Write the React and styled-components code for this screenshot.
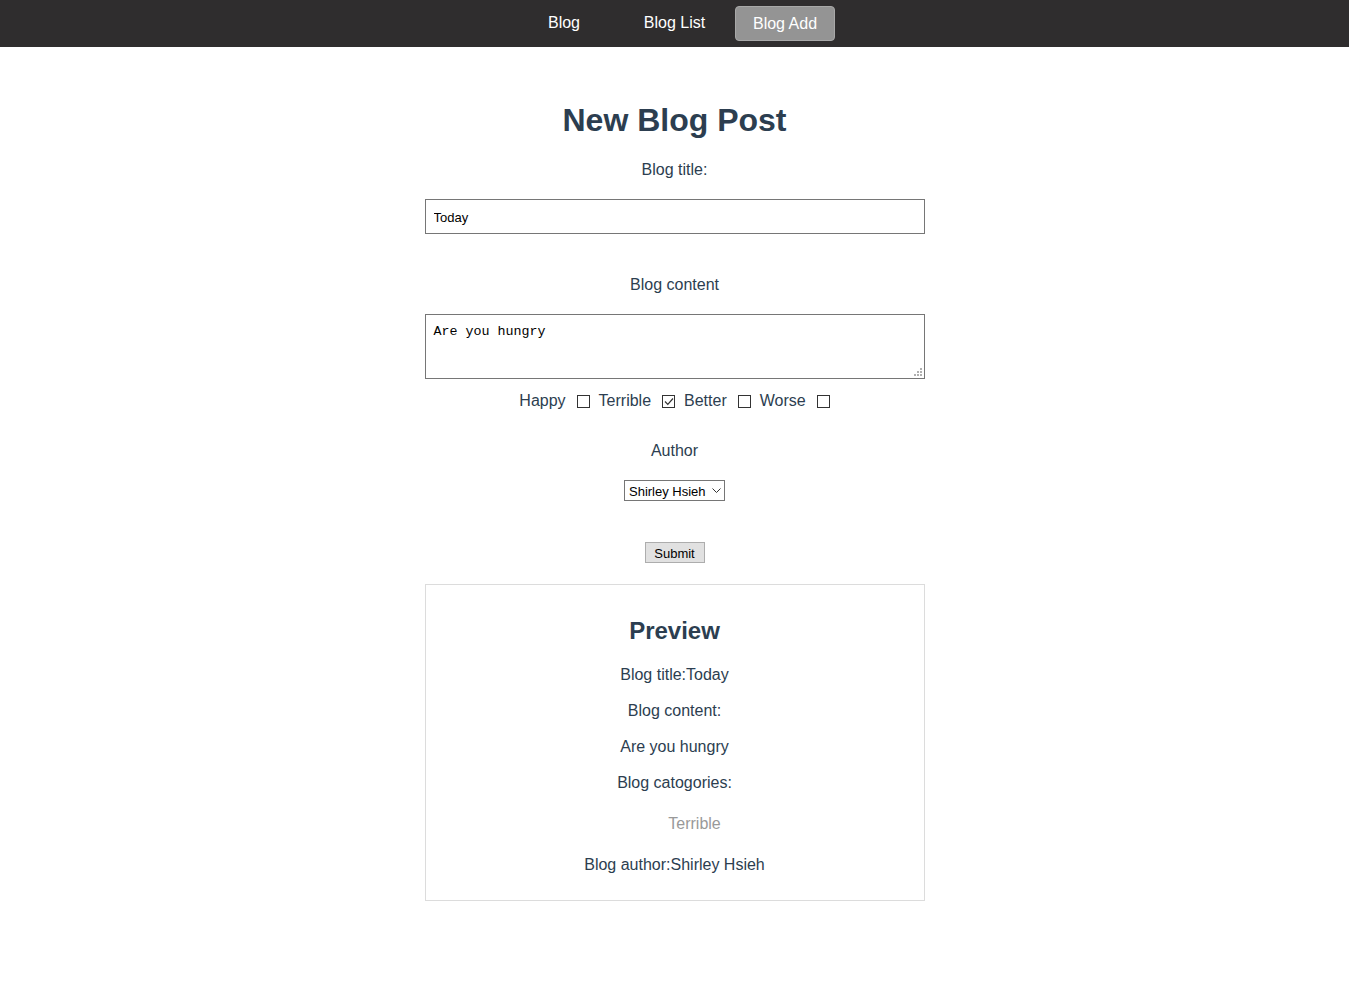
import React, { useState } from "react";
import styled, { createGlobalStyle } from "styled-components";

const Global = createGlobalStyle`
  html, body { margin: 0; padding: 0; background: #fff; }
  body { font-family: "Liberation Sans", Arial, sans-serif; color: #2c3e50; }
  * { box-sizing: border-box; }
`;

const Nav = styled.nav`
  height: 47px;
  background: #2f2d2e;
  padding: 6px 0;
  display: flex;
  justify-content: center;
  gap: 10.5px;
`;

const NavItem = styled.a`
  width: 100px;
  height: 35px;
  display: flex;
  align-items: center;
  justify-content: center;
  font-size: 16px;
  color: #fff;
  text-decoration: none;
  border-radius: 4px;
  border: 1px solid ${(p) => (p.$active ? "#a8a8a8" : "transparent")};
  background: ${(p) => (p.$active ? "#949494" : "transparent")};
  padding-top: ${(p) => (p.$active ? "1px" : "0")};
  padding-bottom: ${(p) => (p.$active ? "0" : "1px")};
`;

const Main = styled.main`
  width: 500px;
  margin: 0 auto;
  display: flex;
  flex-direction: column;
  align-items: center;
  text-align: center;
  padding-bottom: 40px;
`;

const Title = styled.h1`
  margin: 55px 0 0;
  font-size: 32px;
  font-weight: 700;
  line-height: 37px;
`;

const Label = styled.label`
  display: block;
  margin-top: ${(p) => p.$mt}px;
  padding-top: 1px;
  font-size: 16px;
  line-height: 20px;
`;

const TextInput = styled.input`
  display: block;
  width: 100%;
  height: 35px;
  margin-top: 19px;
  padding: 2px 8px 0;
  border: 1px solid #767676;
  font-family: "Liberation Sans", Arial, sans-serif;
  font-size: 13px;
  color: #000;
  outline: none;
`;

const AreaWrap = styled.div`
  position: relative;
  width: 100%;
  margin-top: 19px;
`;

const TextArea = styled.textarea`
  display: block;
  width: 100%;
  height: 65px;
  padding: 9px 8px 8px;
  border: 1px solid #767676;
  font-family: "Liberation Mono", "Courier New", monospace;
  font-size: 13.33px;
  color: #000;
  outline: none;
  resize: none;
`;

const Grip = styled.svg`
  position: absolute;
  right: 3px;
  bottom: 3px;
  pointer-events: none;
`;

const CheckRow = styled.div`
  margin-top: 12px;
  display: flex;
  align-items: center;
  justify-content: center;
  font-size: 16px;
  line-height: 20px;
`;

const CheckLabel = styled.span``;

const Box = styled.span`
  width: 13px;
  height: 13px;
  margin: 1px 9px 0 11px;
  border: 1px solid #333;
  background: #fff;
  display: inline-flex;
  align-items: center;
  justify-content: center;
  cursor: pointer;
  &:last-child { margin-right: 0; }
`;

const SelectWrap = styled.div`
  position: relative;
  margin-top: 19px;
  width: 101px;
  height: 21px;
`;

const Select = styled.select`
  appearance: none;
  width: 100%;
  height: 100%;
  border: 1px solid #767676;
  border-radius: 0;
  background: #fff;
  padding: 1px 0 0 4px;
  font-family: "Liberation Sans", Arial, sans-serif;
  font-size: 13px;
  color: #000;
  outline: none;
`;

const Chevron = styled.svg`
  position: absolute;
  right: 4px;
  top: 8px;
  pointer-events: none;
`;

const SubmitButton = styled.button`
  margin-top: 41px;
  width: 60px;
  height: 21px;
  padding: 2px 0 0;
  border: 1px solid #adadad;
  background: #e1e1e1;
  font-family: "Liberation Sans", Arial, sans-serif;
  font-size: 13px;
  color: #000;
`;

const Preview = styled.section`
  margin-top: 21px;
  width: 100%;
  border: 1px solid #dcdcdc;
  padding: 32px 20px 25px;
  display: flex;
  flex-direction: column;
  align-items: stretch;
`;

const PreviewTitle = styled.h2`
  margin: 0;
  font-size: 24px;
  font-weight: 700;
  line-height: 28px;
`;

const P = styled.p`
  margin: ${(p) => p.$mt}px 0 0;
  font-size: 16px;
  line-height: 20px;
`;

const CatList = styled.ul`
  margin: 21px 0 0;
  padding-left: 40px;
  list-style: none;
`;

const CatItem = styled.li`
  font-size: 16px;
  line-height: 20px;
  color: #999;
`;

const categories = ["Happy", "Terrible", "Better", "Worse"];

export default function App() {
  const [title, setTitle] = useState("Today");
  const [content, setContent] = useState("Are you hungry");
  const [checked, setChecked] = useState({ Terrible: true });
  const [author, setAuthor] = useState("Shirley Hsieh");

  return (
    <>
      <Global />
      <Nav>
        <NavItem href="#">Blog</NavItem>
        <NavItem href="#">Blog List</NavItem>
        <NavItem href="#" $active>Blog Add</NavItem>
      </Nav>
      <Main>
        <Title>New Blog Post</Title>
        <Label $mt={20}>Blog title:</Label>
        <TextInput value={title} onChange={(e) => setTitle(e.target.value)} />
        <Label $mt={40}>Blog content</Label>
        <AreaWrap>
          <TextArea value={content} onChange={(e) => setContent(e.target.value)} />
          <Grip width="8" height="8" viewBox="0 0 8 8">
            <rect x="6" y="0" width="2" height="2" fill="#b0b0b0" />
            <rect x="3" y="3" width="2" height="2" fill="#b0b0b0" />
            <rect x="6" y="3" width="2" height="2" fill="#b0b0b0" />
            <rect x="0" y="6" width="2" height="2" fill="#b0b0b0" />
            <rect x="3" y="6" width="2" height="2" fill="#b0b0b0" />
            <rect x="6" y="6" width="2" height="2" fill="#b0b0b0" />
          </Grip>
        </AreaWrap>
        <CheckRow>
          {categories.map((c) => (
            <React.Fragment key={c}>
              <CheckLabel>{c}</CheckLabel>
              <Box onClick={() => setChecked({ ...checked, [c]: !checked[c] })}>
                {checked[c] && (
                  <svg width="10" height="9" viewBox="0 0 10 9">
                    <path d="M1 4.5 L3.8 7.3 L9 1.5" fill="none" stroke="#333" strokeWidth="1.2" />
                  </svg>
                )}
              </Box>
            </React.Fragment>
          ))}
        </CheckRow>
        <Label $mt={29}>Author</Label>
        <SelectWrap>
          <Select value={author} onChange={(e) => setAuthor(e.target.value)}>
            <option>Shirley Hsieh</option>
            <option>Someone Else</option>
          </Select>
          <Chevron width="9" height="5" viewBox="0 0 9 5">
            <path d="M0.5 0.5 L4.5 4.5 L8.5 0.5" fill="none" stroke="#333" strokeWidth="1" />
          </Chevron>
        </SelectWrap>
        <SubmitButton>Submit</SubmitButton>
        <Preview>
          <PreviewTitle>Preview</PreviewTitle>
          <P $mt={20}>Blog title:{title}</P>
          <P $mt={16}>Blog content:</P>
          <P $mt={16}>{content}</P>
          <P $mt={16}>Blog catogories:</P>
          <CatList>
            {categories.filter((c) => checked[c]).map((c) => (
              <CatItem key={c}>{c}</CatItem>
            ))}
          </CatList>
          <P $mt={21}>Blog author:{author}</P>
        </Preview>
      </Main>
    </>
  );
}
